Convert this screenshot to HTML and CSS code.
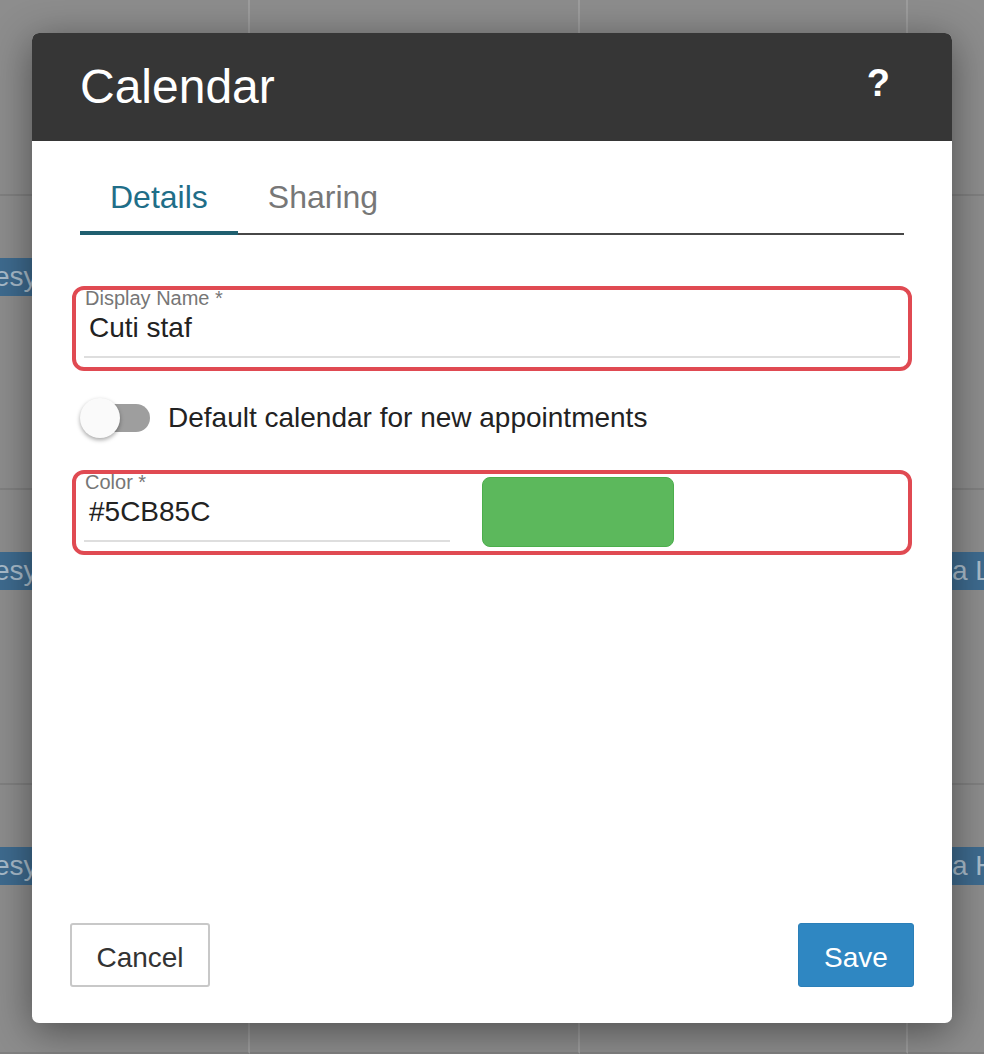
FILE: index.html
```html
<!DOCTYPE html>
<html>
<head>
<meta charset="utf-8">
<link rel="stylesheet" href="styles.css">
</head>
<body>
<div class="backdrop">
  <div class="cell"></div><div class="cell"></div><div class="cell"></div><div class="cell"></div>
  <div class="cell"><div class="chip chip-left">Jesy</div></div><div class="cell"></div><div class="cell"></div><div class="cell"></div>
  <div class="cell"><div class="chip chip-left">Jesy</div></div><div class="cell"></div><div class="cell"></div><div class="cell"><div class="chip chip-right">Dina L</div></div>
  <div class="cell"><div class="chip chip-left">Jesy</div></div><div class="cell"></div><div class="cell"></div><div class="cell"><div class="chip chip-right">Dina H</div></div>
</div>

<div class="modal">
  <div class="modal-header">
    <h1 class="modal-title">Calendar</h1>
    <span class="help">?</span>
  </div>
  <div class="modal-body">
    <div class="tabs">
      <div class="tab active">Details</div>
      <div class="tab">Sharing</div>
    </div>

    <div class="field-box">
      <div class="field">
        <label class="field-label">Display Name *</label>
        <div class="field-value">Cuti staf</div>
      </div>
    </div>

    <div class="toggle-row">
      <span class="toggle"><span class="track"></span><span class="thumb"></span></span>
      <span class="toggle-label">Default calendar for new appointments</span>
    </div>

    <div class="field-box color-box">
      <div class="field color-field">
        <label class="field-label">Color *</label>
        <div class="field-value">#5CB85C</div>
      </div>
      <div class="swatch"></div>
    </div>
  </div>
  <div class="modal-footer">
    <button class="btn btn-cancel">Cancel</button>
    <button class="btn btn-save">Save</button>
  </div>
</div>
</body>
</html>
```
FILE: styles.css
```css
html, body {
  margin: 0;
  padding: 0;
}
body {
  width: 984px;
  height: 1054px;
  overflow: hidden;
  background: #8d8d8d;
  font-family: "Liberation Sans", Arial, sans-serif;
  position: relative;
}
.backdrop {
  display: grid;
  grid-template-columns: 250px 330px 328px 1fr;
  grid-template-rows: 196px 294px 295px 1fr;
  height: 1054px;
}
.cell {
  border-right: 2px solid #9d9d9d;
  border-bottom: 2px solid #808080;
  position: relative;
  overflow: hidden;
}
.cell:nth-child(4n) {
  border-right: none;
}
.chip {
  position: absolute;
  top: 62px;
  height: 38px;
  line-height: 38px;
  background: #3e6b8f;
  color: #a9bccb;
  font-size: 28px;
  white-space: nowrap;
  overflow: hidden;
}
.chip-left {
  left: -20px;
  width: 200px;
}
.chip-right {
  left: 2px;
  right: 0;
  padding-left: 0;
}

.modal {
  position: absolute;
  left: 32px;
  top: 33px;
  width: 920px;
  height: 990px;
  background: #fff;
  border-radius: 7px;
  box-shadow: 0 8px 40px rgba(0, 0, 0, 0.45);
  display: flex;
  flex-direction: column;
  overflow: hidden;
}
.modal-header {
  height: 108px;
  background: #363636;
  display: flex;
  align-items: center;
  justify-content: space-between;
  padding: 0 62px 0 48px;
  flex-shrink: 0;
}
.modal-title {
  margin: 0;
  color: #fff;
  font-size: 48px;
  font-weight: 400;
  line-height: 56px;
}
.help {
  color: #fff;
  font-size: 38px;
  font-weight: 700;
  line-height: 40px;
  margin-top: -8px;
}
.modal-body {
  flex: 1;
  padding: 20px 48px 0;
}
.tabs {
  display: flex;
  border-bottom: 2px solid #474747;
}
.tab {
  padding: 17px 30px;
  font-size: 32px;
  line-height: 38px;
  color: #777;
}
.tab.active {
  color: #1f6e88;
  border-bottom: 4px solid #1f5f6f;
  margin-bottom: -2px;
  padding-bottom: 15px;
}

.field-box {
  position: relative;
  margin: 51px -8px 0;
  height: 85px;
  box-sizing: border-box;
  padding: 4px 12px 0;
  display: flex;
  align-items: flex-start;
}
.field-box::after {
  content: "";
  position: absolute;
  inset: 0;
  border: 4px solid #e04a52;
  border-radius: 12px;
  pointer-events: none;
}
.field {
  flex: 1;
  border-bottom: 2px solid #dedede;
  height: 68px;
  box-sizing: border-box;
}
.field-label {
  display: block;
  margin-top: -2px;
  font-size: 20px;
  line-height: 20px;
  color: #767676;
  padding-left: 1px;
}
.field-value {
  margin-top: 4px;
  font-size: 28px;
  line-height: 32px;
  color: #222;
  padding-left: 5px;
}
.toggle-row {
  display: flex;
  align-items: center;
  height: 40px;
  margin: 27px 0 0;
}
.toggle {
  position: relative;
  width: 70px;
  height: 40px;
  flex-shrink: 0;
}
.track {
  position: absolute;
  left: 8px;
  top: 6px;
  width: 62px;
  height: 28px;
  border-radius: 14px;
  background: #9e9e9e;
}
.thumb {
  position: absolute;
  left: 0;
  top: 0;
  width: 40px;
  height: 40px;
  border-radius: 50%;
  background: #fafafa;
  box-shadow: 0 2px 4px rgba(0, 0, 0, 0.35);
}
.toggle-label {
  margin-left: 18px;
  font-size: 28px;
  color: #222;
}
.color-box {
  margin-top: 32px;
  gap: 32px;
}
.color-field {
  flex: 0 0 366px;
}
.swatch {
  margin-top: 3px;
  width: 192px;
  height: 70px;
  box-sizing: border-box;
  background: #5cb85c;
  border: 1px solid #4cae4c;
  border-radius: 8px;
}

.modal-footer {
  display: flex;
  justify-content: space-between;
  padding: 0 38px 36px;
}
.btn {
  height: 64px;
  font-family: "Liberation Sans", Arial, sans-serif;
  font-size: 28px;
  border-radius: 3px;
  padding: 5px 0 0;
  cursor: pointer;
}
.btn-cancel {
  width: 140px;
  background: #fff;
  color: #333;
  border: 2px solid #c8c8c8;
}
.btn-save {
  width: 116px;
  background: #2f87c2;
  color: #fff;
  border: 1px solid #2b7fb8;
}
```
